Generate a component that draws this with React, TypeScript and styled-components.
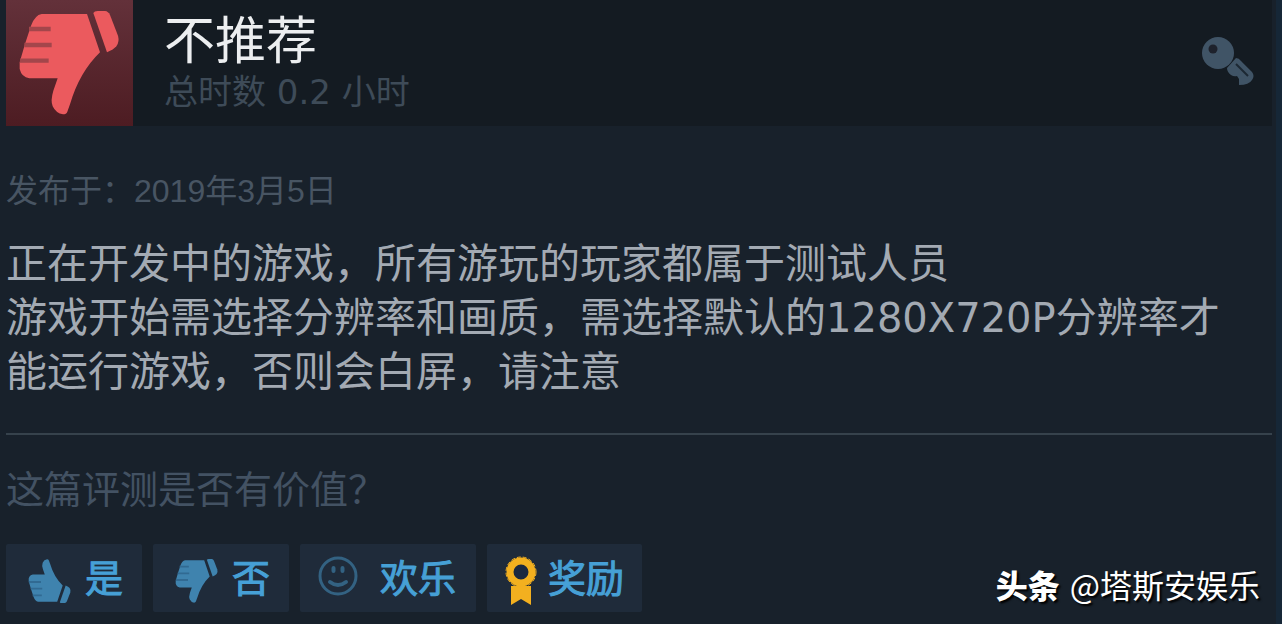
import React from "react";
import styled, { createGlobalStyle } from "styled-components";

const GlobalStyle = createGlobalStyle`
  *, *::before, *::after { box-sizing: border-box; }
  body {
    margin: 0;
    background: #18212b;
    font-family: "DejaVu Sans", "Noto Sans CJK SC", sans-serif;
  }
  h1, p { margin: 0; font-weight: 400; }
`;

const Page = styled.main`
  position: relative;
  min-height: 100vh;
  padding: 0 4px 12px 6px;
  background: #18212b;
  border-right: 6px solid #162737;
`;

const Header = styled.header`
  display: flex;
  align-items: flex-start;
  height: 126px;
  background: #141b22;
`;

const Verdict = styled.div`
  display: flex;
  align-items: center;
  justify-content: center;
  width: 127px;
  height: 126px;
  background: linear-gradient(#63313a, #4d1c22);
`;

const Heading = styled.div`
  flex: 1;
  padding: 8px 0 0 31px;
`;

const Title = styled.h1`
  font-family: "Noto Sans CJK SC", sans-serif;
  font-size: 51px;
  line-height: 58px;
  color: #eceef0;
`;

const Hours = styled.p`
  font-size: 34px;
  line-height: 52px;
  color: #3e4b58;
`;

const KeyMark = styled.div`
  padding: 36px 16px 0 0;
`;

const Posted = styled.p`
  margin-top: 41px;
  font-family: "Liberation Sans", "Noto Sans CJK SC", sans-serif;
  font-size: 32px;
  line-height: 48px;
  color: #485563;
`;

const Review = styled.p`
  margin-top: 18px;
  padding-right: 40px;
  font-family: "Noto Sans CJK SC", sans-serif;
  font-size: 41px;
  line-height: 54px;
  color: #a3aab3;
`;

const Resolution = styled.span`
  font-family: "DejaVu Sans", sans-serif;
  font-size: 40px;
  line-height: 1;
`;

const Divider = styled.hr`
  height: 2px;
  margin: 38px 0 0;
  border: 0;
  background: #36424c;
`;

const Question = styled.p`
  margin-top: 24px;
  font-family: "Noto Sans CJK SC", sans-serif;
  font-size: 38px;
  line-height: 56px;
  color: #435263;
`;

const Votes = styled.div`
  display: flex;
  gap: 11px;
  margin-top: 29px;
`;

const VoteButton = styled.button<{ $left: number; $gap: number; $right: number }>`
  display: flex;
  align-items: center;
  gap: ${(p) => p.$gap}px;
  height: 68px;
  padding: 0 ${(p) => p.$right}px 4px ${(p) => p.$left}px;
  border: 0;
  border-radius: 2px;
  background: #1f2b3a;
  color: #46a0d6;
  font-family: "Noto Sans CJK SC", sans-serif;
  font-size: 38px;
  line-height: 56px;
  -webkit-text-stroke: 1px #46a0d6;
  white-space: nowrap;
  cursor: pointer;
`;

const LowIcon = styled.span`
  display: flex;
  padding-top: 10px;
`;

const Credit = styled.div`
  position: absolute;
  right: 16px;
  bottom: 16px;
  display: flex;
  gap: 10px;
  font-family: "Noto Sans CJK SC", sans-serif;
  font-size: 32px;
  line-height: 48px;
  color: #ffffff;
  text-shadow: 2px 2px 2px #000000;
`;

const Brand = styled.strong`
  font-weight: 900;
`;

function Thumb({ size, color, line, up }: { size: number; color: string; line: string; up?: boolean }) {
  return (
    <svg width={size} height={size} viewBox="51 36 312 312" aria-hidden="true">
      <g transform={up ? "matrix(1 0 0 -1 0 384)" : undefined}>
        <path
          fill={color}
          d="M122 45H258L297 160Q235 220 207 316L199 338Q196 346 186 346Q165 343 155 322Q148 305 157 275L170 238H85Q62 235 56 210V190L72 135L90 80Q102 48 122 45Z"
        />
        <path
          fill={color}
          d="M277 42Q280 36 290 36H312Q322 37 327 48L351 110Q356 128 346 142Q338 152 318 160Z"
        />
        <path d="M84 90H149M70 138H152M57 185H143" stroke={line} strokeWidth="13" fill="none" />
      </g>
    </svg>
  );
}

function KeyIcon() {
  return (
    <svg width="54" height="50" viewBox="0 0 54 50" aria-hidden="true">
      <circle cx="16" cy="17" r="16" fill="#405466" />
      <circle cx="11" cy="13" r="4.500" fill="#1e222c" />
      <path
        fill="#405466"
        d="M34 22Q37 22 39 25L50 36Q53 40 50 44Q47 49 37 49V43L35 40Q32 41 29 39Q25 36 25 32Z"
      />
      <path d="M34 28L46 40" stroke="#1c2833" strokeWidth="2" />
    </svg>
  );
}

function Smile() {
  return (
    <svg width="40" height="40" viewBox="0 0 40 40" fill="none" stroke="#336282" aria-hidden="true">
      <circle cx="20" cy="20" r="18" strokeWidth="3" />
      <path d="M15.500 12V15M24.500 12V15" strokeWidth="4" strokeLinecap="round" />
      <path d="M12 26Q20 32 28 26" strokeWidth="4" strokeLinecap="round" />
    </svg>
  );
}

function Ribbon() {
  return (
    <svg width="32" height="50" viewBox="0 0 32 50" aria-hidden="true">
      <path d="M6 30H26V49L16 43L6 49Z" fill="#f3b01f" />
      <circle cx="16" cy="16" r="11" fill="#1b2840" stroke="#f3b01f" strokeWidth="7" />
      <circle cx="16" cy="16" r="15" fill="none" stroke="#f3b01f" strokeWidth="1" strokeDasharray="4 2" />
    </svg>
  );
}

export default function App() {
  return (
    <>
      <GlobalStyle />
      <Page>
        <Header>
          <Verdict>
            <Thumb size={104} color="#eb5a5e" line="#a3464b" />
          </Verdict>
          <Heading>
            <Title>不推荐</Title>
            <Hours>总时数 0.2 小时</Hours>
          </Heading>
          <KeyMark>
            <KeyIcon />
          </KeyMark>
        </Header>
        <Posted>发布于：2019年3月5日</Posted>
        <Review>
          正在开发中的游戏，所有游玩的玩家都属于测试人员
          <br />
          游戏开始需选择分辨率和画质，需选择默认的<Resolution>1280X720P</Resolution>分辨率才能运行游戏，否则会白屏，请注意
        </Review>
        <Divider />
        <Question>这篇评测是否有价值？</Question>
        <Votes>
          <VoteButton type="button" $left={22} $gap={13} $right={19}>
            <LowIcon><Thumb size={44} color="#3f83ae" line="#316a92" up /></LowIcon>是
          </VoteButton>
          <VoteButton type="button" $left={22} $gap={13} $right={19}>
            <LowIcon><Thumb size={44} color="#3f83ae" line="#316a92" /></LowIcon>否
          </VoteButton>
          <VoteButton type="button" $left={18} $gap={22} $right={20}>
            <Smile />欢乐
          </VoteButton>
          <VoteButton type="button" $left={18} $gap={11} $right={18}>
            <LowIcon><Ribbon /></LowIcon>奖励
          </VoteButton>
        </Votes>
        <Credit>
          <Brand>头条</Brand>
          <span>@塔斯安娱乐</span>
        </Credit>
      </Page>
    </>
  );
}
